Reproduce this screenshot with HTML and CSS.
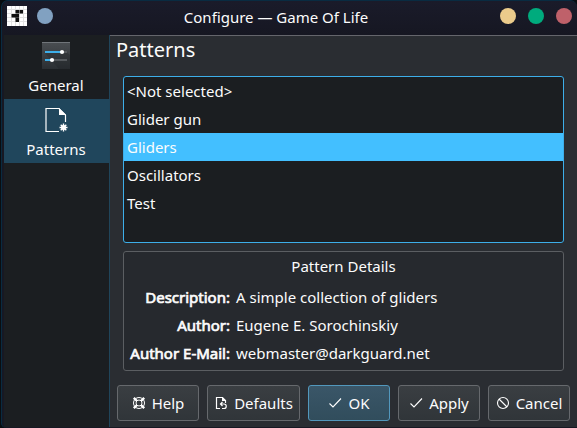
FILE: index.html
```html
<!DOCTYPE html>
<html lang="en">
<head>
<meta charset="utf-8">
<title>Configure — Game Of Life</title>
<link rel="stylesheet" href="styles.css">
</head>
<body>
<div class="window">
  <header class="titlebar">
    <svg class="app-icon" width="20" height="20" viewBox="0 0 20 20"><path fill="#fff" d="M0 0h20v20H0z"/><path stroke="#e2e2e2" d="M4.500 0v20M8.500 0v20M12.500 0v20M16.500 0v20M0 3.500h20M0 7.500h20M0 11.500h20M0 15.500h20"/><path fill="#111" d="M8.500 4H12v3.500H8.500zM12.500 4H16v3.500h-3.500zM4.500 8H8v3.500H4.500zM8 8h4v3.700H8zM8.500 12H12v4H8.500z"/></svg>
    <span class="dot blue"></span>
    <h1 class="title">Configure — Game Of Life</h1>
    <span class="dot yellow"></span>
    <span class="dot green"></span>
    <span class="dot red"></span>
  </header>
  <div class="body">
    <nav class="sidebar">
      <div class="page-item">
        <svg width="28" height="28" viewBox="0 0 28 28"><defs><linearGradient id="g" x2="0" y2="1"><stop stop-color="#4a4e52"/><stop offset="1" stop-color="#2b2f33"/></linearGradient></defs><path fill="url(#g)" d="M0 0h28v27H0z"/><path fill="#1d2023" opacity=".3" d="M3 11l14 16h11V13l-6-5z"/><path stroke="#70757a" d="M0 .5h28"/><path stroke="#55595d" stroke-width="2" d="M20 10h5M10 18h15"/><path stroke="#3daee9" stroke-width="2" d="M3 10h17M3 18h7"/><circle cx="20" cy="10" r="2.100" fill="#fff"/><circle cx="10" cy="18" r="2.100" fill="#fff"/></svg>
        <span>General</span>
      </div>
      <div class="page-item active">
        <svg width="28" height="28" viewBox="0 0 28 28"><path fill="none" stroke="#fff" stroke-width="1.200" d="M17 25.500H4V2.500h13l6.500 6.500v7"/><path fill="#fff" d="M17 2l7 7h-7z"/><path stroke="#fff" stroke-width="1.400" d="M21.500 17.500v8M17.500 21.500h8M18.700 18.700l5.600 5.600M24.300 18.700l-5.600 5.600"/><circle cx="21.500" cy="21.500" r="2.500" fill="#fff"/></svg>
        <span>Patterns</span>
      </div>
    </nav>
    <main class="content">
      <h2 class="heading">Patterns</h2>
      <ul class="list">
        <li>&lt;Not selected&gt;</li>
        <li>Glider gun</li>
        <li class="selected">Gliders</li>
        <li>Oscillators</li>
        <li>Test</li>
      </ul>
      <section class="details">
        <h3>Pattern Details</h3>
        <dl>
          <dt>Description:</dt><dd>A simple collection of gliders</dd>
          <dt>Author:</dt><dd>Eugene E. Sorochinskiy</dd>
          <dt>Author E-Mail:</dt><dd>webmaster@darkguard.net</dd>
        </dl>
      </section>
      <footer class="buttons">
        <button><svg width="16" height="16" viewBox="0 0 16 16"><g fill="none" stroke="#fff"><circle cx="8" cy="8" r="5.500"/><circle cx="8" cy="8" r="3"/><path stroke-width="2.400" d="M2.800 2.800L6 6M13.200 2.800L10 6M13.200 13.200L10 10M2.800 13.200L6 10"/></g></svg>Help</button>
        <button class="wide"><svg width="16" height="16" viewBox="0 0 16 16"><path fill="none" stroke="#fff" stroke-width="1.200" d="M7 13.500H3.500v-11h6l3 3V8"/><path fill="#fff" d="M9 2l4 4H9z"/><path fill="none" stroke="#fff" stroke-width="1.200" d="M9.500 7L7.500 9l2 2M8 9h3a2.250 2.250 0 0 1 0 4.500H9"/></svg>Defaults</button>
        <button class="default"><svg width="16" height="16" viewBox="0 0 16 16"><path fill="none" stroke="#fff" stroke-width="1.100" d="M2.500 8.500L6 12l8-8.500"/></svg>OK</button>
        <button><svg width="16" height="16" viewBox="0 0 16 16"><path fill="none" stroke="#fff" stroke-width="1.100" d="M2.500 8.500L6 12l8-8.500"/></svg>Apply</button>
        <button><svg width="16" height="16" viewBox="0 0 16 16"><g fill="none" stroke="#fff" stroke-width="1.100"><circle cx="8" cy="8" r="5.500"/><path d="M4 4l8 8"/></g></svg>Cancel</button>
      </footer>
    </main>
  </div>
</div>
</body>
</html>
```
FILE: styles.css
```css
* { box-sizing: border-box; }
body {
  margin: 0;
  background: #090d10;
  color: #fcfcfc;
  font: 15px/20px "Noto Sans", sans-serif;
  overflow: hidden;
}
h1, h2, h3, ul, dl, dd { margin: 0; padding: 0; font-weight: 400; }
svg { display: block; flex: none; }
.window {
  width: 576px;
  height: 428px;
  margin-left: 1px;
  padding: 0 0 1px 2px;
  border: 1px solid #092b41;
  border-right: 0;
  border-bottom: 0;
  border-radius: 7px 7px 0 5px;
  background: #171823;
  overflow: hidden;
}
.titlebar {
  display: flex;
  align-items: center;
  height: 34px;
  padding: 0 5px 4px 3px;
  background: linear-gradient(#1a1b2a, #161722);
}
.title { flex: 1; text-align: center; font-size: 15px; padding: 2px 14px 0 0; }
.dot { width: 16px; height: 16px; border-radius: 50%; margin-left: 12px; }
.blue { background: #81a1c1; margin-left: 10px; margin-right: 25px; }
.yellow { background: #ebcb8b; }
.green { background: #00ab7d; }
.red { background: #bf616a; }
.body { display: flex; height: 392px; }
.sidebar { width: 106px; background: #1b1e21; border-right: 1px solid #20455a; }
.page-item {
  display: flex;
  flex-direction: column;
  align-items: center;
  justify-content: space-between;
  height: 64px;
  padding: 7px 1px 4px 0;
}
.page-item.active { background: #20465c; }
.content { flex: 1; padding: 0 6px 0 7px; background: #2a2d32; border-top: 1px solid #65666c; }
.heading { font-size: 20px; line-height: 28px; height: 40px; margin-left: -1px; }
.list {
  height: 167px;
  margin: 0 7px 8px 6px;
  padding: 0;
  border: 1px solid #3daee9;
  border-radius: 3px;
  background: #1b1e21;
  list-style: none;
}
.list li { height: 28px; line-height: 28px; padding-left: 3px; }
.selected { background: #43bfff; }
.details {
  height: 120px;
  margin: 0 7px 14px 6px;
  padding: 4px 6px;
  border: 1px solid #5b5e62;
  border-radius: 3px;
  background: #26292e;
}
.details h3 { font-size: 15px; text-align: center; height: 27px; }
.details dl { display: grid; grid-template-columns: 100px 1fr; column-gap: 6px; line-height: 28px; }
.details dt { text-align: right; white-space: nowrap; -webkit-text-stroke: .7px #fcfcfc; }
.buttons { display: flex; gap: 8px; }
.buttons button {
  display: flex;
  align-items: center;
  justify-content: center;
  gap: 5px;
  width: 82px;
  height: 36px;
  padding: 0 1px 0 0;
  border: 1px solid #66696d;
  border-radius: 3px;
  background: linear-gradient(#3a3e42, #303539);
  color: inherit;
  font: inherit;
}
.buttons .wide { width: 93px; }
.buttons .default { border-color: #5298bd; background: linear-gradient(#3a5668, #314d5c); }
```
